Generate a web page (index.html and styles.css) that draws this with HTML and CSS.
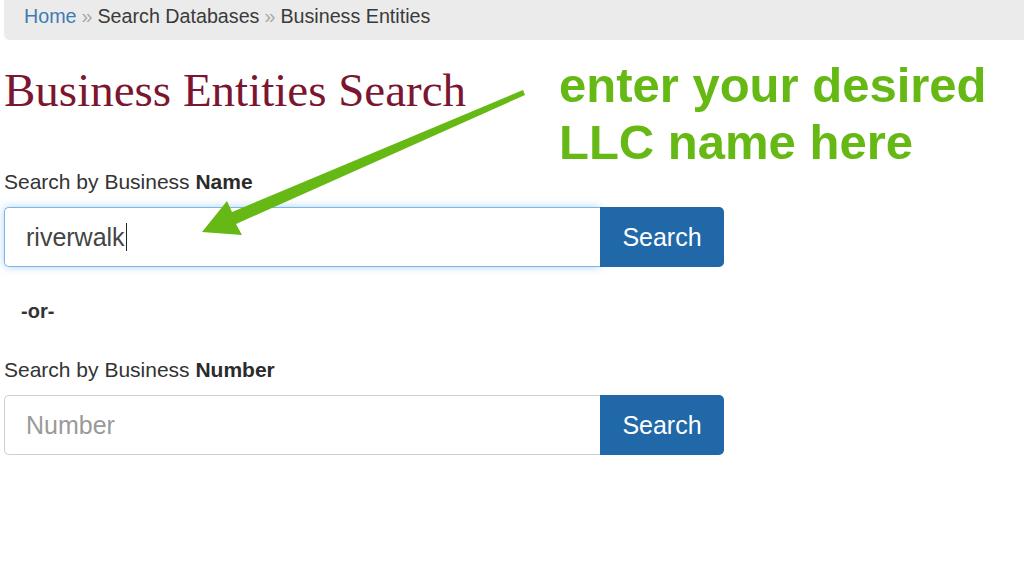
FILE: index.html
```html
<!DOCTYPE html>
<html>
<head>
<meta charset="utf-8">
<link rel="stylesheet" href="styles.css">
</head>
<body>
<div class="page">
  <nav class="crumbs">
    <a class="crumb-link" href="#">Home</a>
    <span class="sep">»</span>
    <span>Search Databases</span>
    <span class="sep">»</span>
    <span>Business Entities</span>
  </nav>

  <main class="content">
    <h1 class="title">Business Entities Search</h1>

    <form class="search-form">
      <label class="field-label">Search by Business <b>Name</b></label>
      <div class="input-group">
        <div class="text-input focused"><span class="value">riverwalk</span><span class="caret"></span></div>
        <button type="button" class="btn">Search</button>
      </div>

      <p class="or">-or-</p>

      <label class="field-label">Search by Business <b>Number</b></label>
      <div class="input-group">
        <div class="text-input"><span class="placeholder">Number</span></div>
        <button type="button" class="btn">Search</button>
      </div>
    </form>
  </main>

  <div class="note">enter your desired<br>LLC name here</div>
  <svg class="arrow" width="1024" height="576" viewBox="0 0 1024 576">
    <polygon fill="#66b814" points="202,232 227,201 232,212 523,90 525,95 236,224 242,235"/>
  </svg>
</div>
</body>
</html>
```

FILE: styles.css
```css
html, body {
  margin: 0;
  padding: 0;
  background: #ffffff;
}

.page {
  position: relative;
  width: 1024px;
  height: 576px;
  overflow: hidden;
  font-family: "Liberation Sans", Arial, sans-serif;
  color: #333333;
}

.crumbs {
  margin-left: 4px;
  height: 40px;
  background: #ebebeb;
  border-bottom-left-radius: 6px;
  display: flex;
  align-items: center;
  gap: 5px;
  padding-left: 20px;
  padding-bottom: 8px;
  box-sizing: border-box;
  font-size: 19.7px;
  color: #3a3a3a;
}

.crumb-link {
  color: #3f7bb3;
  text-decoration: none;
}

.sep {
  color: #a8a8a8;
}

.content {
  padding-left: 4px;
}

.title {
  margin: 22px 0 0 0;
  font-family: "Liberation Serif", "Times New Roman", serif;
  font-weight: normal;
  font-size: 47px;
  line-height: 56px;
  color: #7b1630;
}

.search-form {
  display: flex;
  flex-direction: column;
  width: 720px;
}

.field-label {
  margin-top: 52px;
  font-size: 21px;
  line-height: 24px;
  color: #333333;
}

.field-label b {
  font-weight: bold;
  color: #2b2b2b;
}

.input-group {
  margin-top: 13px;
  display: flex;
  height: 60px;
}

.text-input {
  flex: 1;
  box-sizing: border-box;
  border: 1px solid #cfcfcf;
  border-right: none;
  border-radius: 5px 0 0 5px;
  display: flex;
  align-items: center;
  padding-left: 21px;
  font-size: 25px;
  color: #444444;
}

.text-input.focused {
  border-color: #7db6e6;
  box-shadow: 0 0 8px rgba(102, 175, 233, 0.55);
}

.caret {
  display: inline-block;
  width: 1px;
  height: 28px;
  background: #222222;
  margin-left: 1px;
}

.placeholder {
  color: #9a9a9a;
}

.btn {
  width: 124px;
  border: none;
  border-radius: 0 5px 5px 0;
  background: #2068a8;
  color: #ffffff;
  font-family: "Liberation Sans", Arial, sans-serif;
  font-size: 25px;
  padding: 0;
}

.or {
  margin: 33px 0 0 17px;
  font-size: 20px;
  font-weight: bold;
  line-height: 22px;
  color: #333333;
}

.or + .field-label {
  margin-top: 36px;
}

.note {
  position: absolute;
  left: 559px;
  top: 57px;
  font-size: 49px;
  line-height: 57px;
  font-weight: bold;
  color: #66b814;
}

.arrow {
  position: absolute;
  left: 0;
  top: 0;
  pointer-events: none;
}
```
